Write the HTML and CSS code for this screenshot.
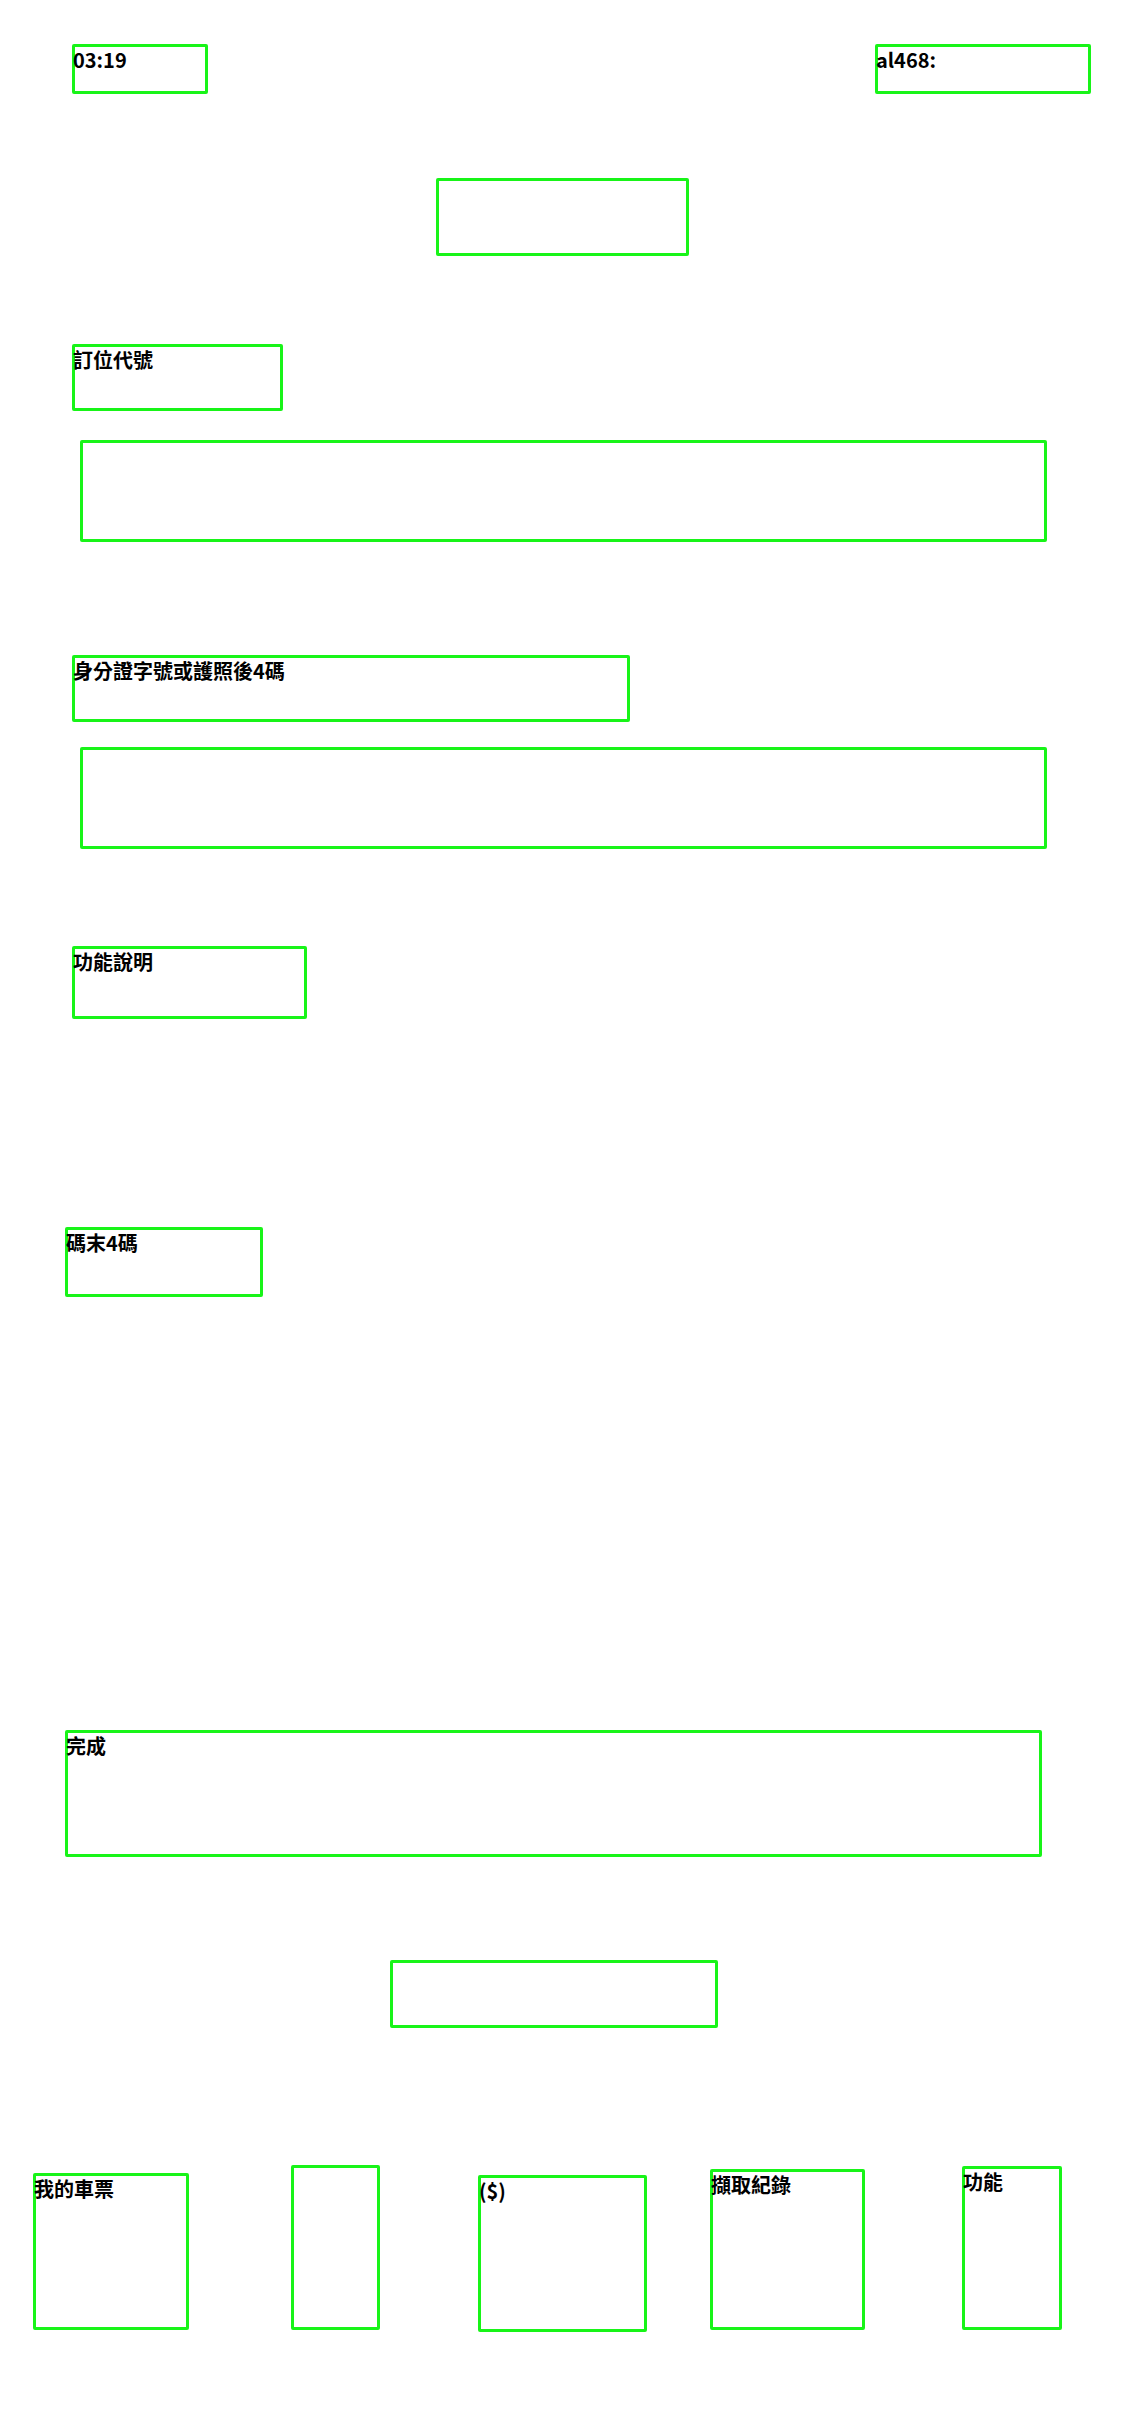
FILE: index.html
```html
<!DOCTYPE html>
<html lang="zh-Hant">
<head>
<meta charset="utf-8">
<title>訂位代號</title>
<link rel="stylesheet" href="styles.css">
</head>
<body>
<div class="page">
  <div class="status">
    <div class="box status-time"><span class="txt">03:19</span></div>
    <div class="box status-right"><span class="txt">al468:</span></div>
  </div>

  <div class="box title-box"></div>

  <div class="box label label-code"><span class="txt">訂位代號</span></div>
  <div class="box field"></div>

  <div class="box label label-id"><span class="txt">身分證字號或護照後4碼</span></div>
  <div class="box field field-id"></div>

  <div class="box label label-help"><span class="txt">功能說明</span></div>

  <div class="box label label-last"><span class="txt">碼末4碼</span></div>

  <div class="box done"><span class="txt">完成</span></div>

  <div class="box extra"></div>

  <nav class="tabbar">
    <div class="box tab tab-ticket"><span class="txt">我的車票</span></div>
    <div class="box tab tab-blank"></div>
    <div class="box tab tab-pay"><span class="txt">($)</span></div>
    <div class="box tab tab-record"><span class="txt">擷取紀錄</span></div>
    <div class="box tab tab-func"><span class="txt">功能</span></div>
  </nav>
</div>
</body>
</html>
```

FILE: styles.css
```css
* {
  box-sizing: border-box;
}

html, body {
  margin: 0;
  padding: 0;
  background: #ffffff;
}

body {
  width: 1125px;
  height: 2436px;
  overflow: hidden;
  font-family: "Noto Sans CJK TC", "Noto Sans", sans-serif;
  font-weight: 700;
  font-size: 20px;
  line-height: 29px;
  color: #000000;
}

.page {
  display: flex;
  flex-direction: column;
  align-items: flex-start;
  padding-top: 44px;
}

.box {
  border: 3px solid #18f418;
  border-radius: 2px;
  background: transparent;
}

.txt {
  display: block;
  margin-left: -2px;
  margin-top: -2px;
  white-space: nowrap;
}

/* status bar */
.status {
  display: flex;
  justify-content: space-between;
  align-self: stretch;
  padding: 0 34px 0 72px;
}

.status-time {
  width: 136px;
  height: 50px;
}

.status-right {
  width: 216px;
  height: 50px;
}

.title-box {
  align-self: center;
  width: 253px;
  height: 78px;
  margin-top: 84px;
}

/* labels */
.label {
  margin-left: 72px;
  height: 67px;
}

.label-code {
  width: 211px;
  margin-top: 88px;
}

.label-id {
  width: 558px;
  margin-top: 113px;
}

.label-help {
  width: 235px;
  height: 73px;
  margin-top: 97px;
}

.label-last {
  width: 198px;
  height: 70px;
  margin-top: 208px;
  margin-left: 65px;
}

/* inputs */
.field {
  width: 967px;
  height: 102px;
  margin-left: 80px;
  margin-top: 29px;
}

.field-id {
  margin-top: 25px;
}

.done {
  width: 977px;
  height: 127px;
  margin-top: 433px;
  margin-left: 65px;
}

.extra {
  width: 328px;
  height: 68px;
  margin-top: 103px;
  margin-left: 390px;
}

/* tab bar */
.tabbar {
  display: flex;
  align-items: flex-end;
  height: 165px;
  margin-top: 137px;
  padding-left: 33px;
}

.tab-ticket {
  width: 156px;
  height: 157px;
}

.tab-blank {
  width: 89px;
  height: 165px;
  margin-left: 102px;
}

.tab-pay {
  width: 169px;
  height: 157px;
  margin-left: 98px;
  margin-bottom: -2px;
}

.tab-record {
  width: 155px;
  height: 161px;
  margin-left: 63px;
}

.tab-func {
  width: 100px;
  height: 164px;
  margin-left: 97px;
}
```
